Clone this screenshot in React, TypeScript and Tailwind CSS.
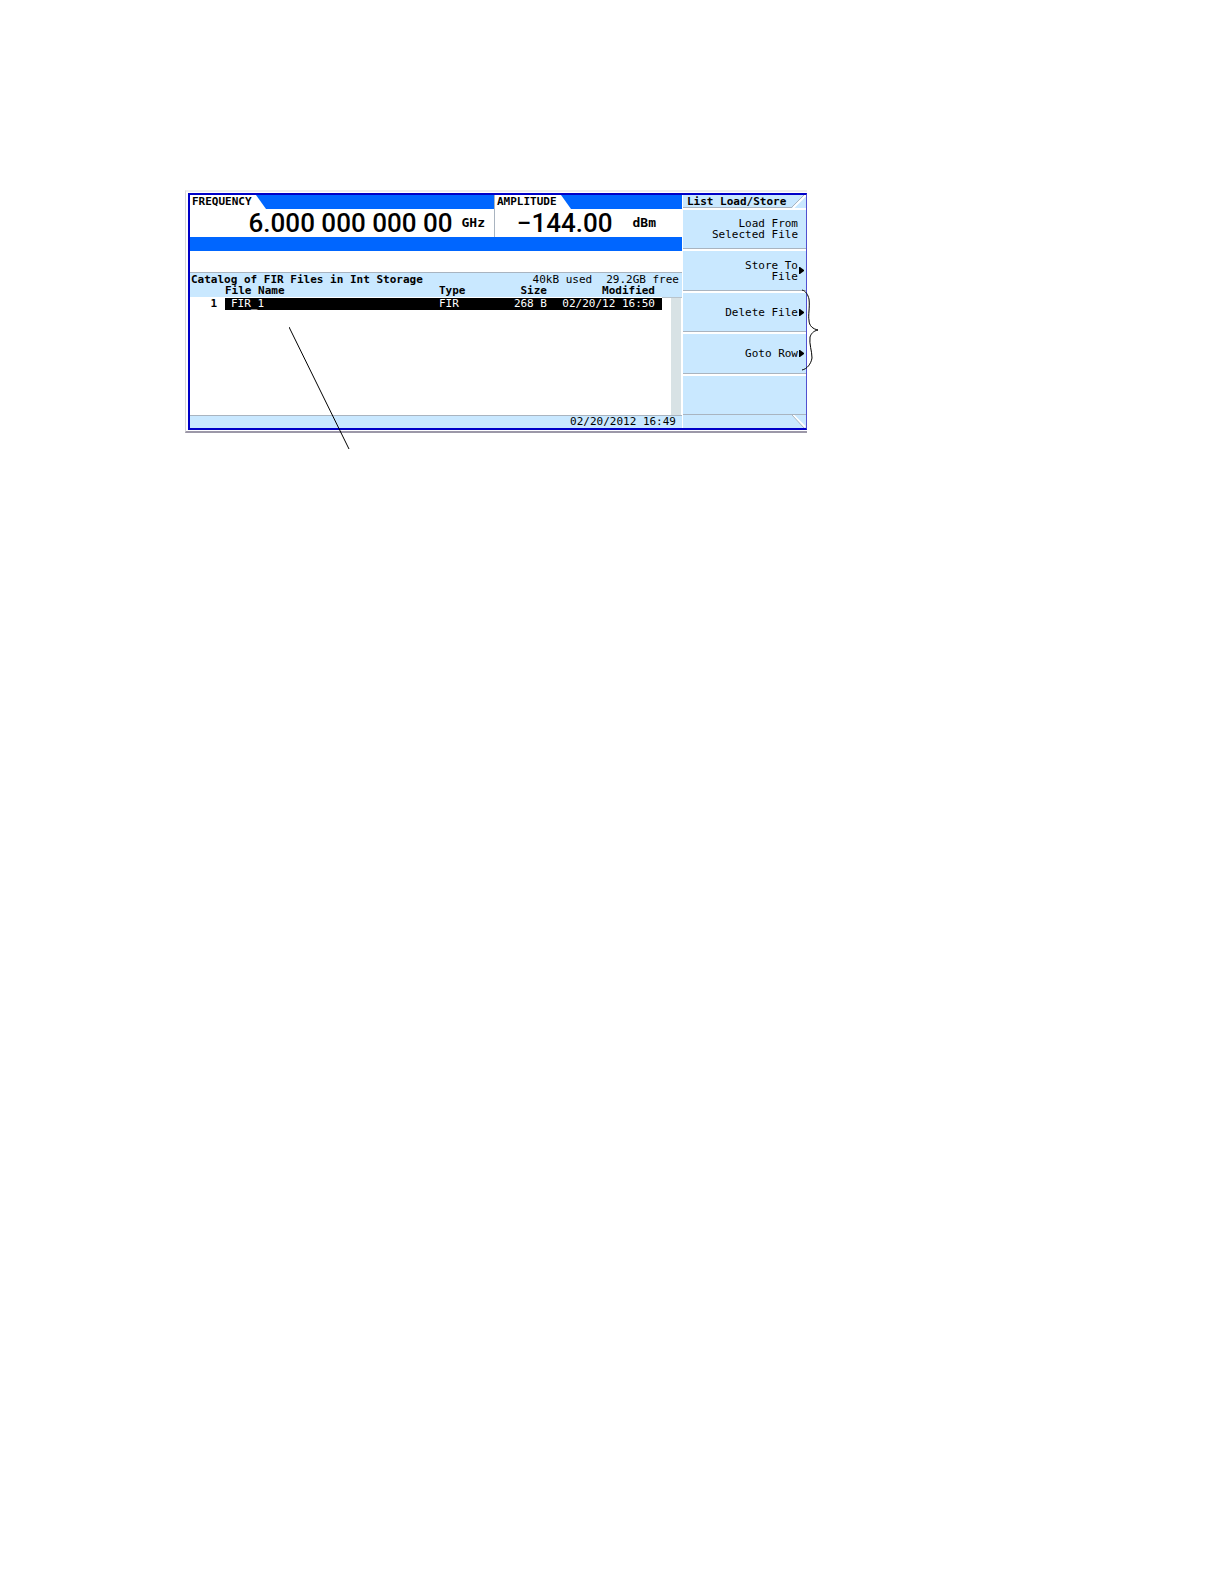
import React from "react";

type SoftKey = { lines: string[]; more?: boolean };

const softKeys: SoftKey[] = [
  { lines: ["Load From", "Selected File"] },
  { lines: ["Store To", "File"], more: true },
  { lines: ["Delete File"], more: true },
  { lines: ["Goto Row"], more: true },
  { lines: [] },
];

const files = [
  { row: 1, name: "FIR_1", type: "FIR", size: "268 B", modified: "02/20/12 16:50" },
];

function Readout({
  label,
  value,
  unit,
  className,
  valueClass,
}: {
  label: string;
  value: string;
  unit: string;
  className: string;
  valueClass: string;
}) {
  return (
    <section className={"flex flex-col " + className}>
      <div className="flex h-[14px] bg-[#0066ff]">
        <h2 className="bg-white pl-[2px] font-bold leading-[14px]">{label}</h2>
        <svg width="14" height="14" viewBox="0 0 14 14" aria-hidden="true">
          <path d="M0 0H4L14 14H0Z" fill="#fff" />
        </svg>
      </div>
      <div className={"flex h-[28px] items-center justify-end whitespace-nowrap bg-white " + valueClass}>
        <span className="font-['Roboto','Liberation_Sans',sans-serif] text-[26px] font-medium leading-[28px]">
          {value}
        </span>
        <span className="text-[13px] font-bold leading-[28px]">{unit}</span>
      </div>
    </section>
  );
}

function SoftKeyButton({ lines, more }: SoftKey) {
  return (
    <button
      type="button"
      aria-label={lines.length ? lines.join(" ") : "Unassigned key"}
      className="flex min-h-[41px] flex-1 items-center justify-end border-b border-t-2 border-b-[#a9b4c0] border-t-white bg-[#c9e8ff] pr-[2px] text-right leading-[11px]"
    >
      <span>
        {lines.map((line) => (
          <span key={line} className="block">
            {line}
          </span>
        ))}
      </span>
      <span className="ml-px w-[5px]">
        {more && (
          <svg width="5" height="7" viewBox="0 0 5 7" className="block" aria-hidden="true">
            <path d="M0 0H1L5 3V4L1 7H0Z" fill="#000" />
          </svg>
        )}
      </span>
    </button>
  );
}

function Catalog() {
  return (
    <section className="flex flex-1 flex-col bg-white">
      <div className="flex justify-between border-t border-[#a9b4c0] bg-[#c9e8ff] pl-[1px] pr-[3px] pt-[1px] leading-[11px]">
        <h3 className="font-bold">Catalog of FIR Files in Int Storage</h3>
        <p className="flex gap-[14px]">
          <span>40kB used</span>
          <span>29.2GB free</span>
        </p>
      </div>
      <div className="flex flex-1">
        <div className="flex-1">
          <table className="w-full table-fixed border-collapse leading-[11px]">
            <colgroup>
              <col className="w-[35px]" />
              <col />
              <col className="w-[62px]" />
              <col className="w-[46px]" />
              <col className="w-[115px]" />
              <col className="w-[9px]" />
            </colgroup>
            <thead className="border-b border-[#b9c4cc] bg-[#c9e8ff] text-left">
              <tr className="h-[12px]">
                <th className="p-0" />
                <th className="p-0">File Name</th>
                <th className="p-0">Type</th>
                <th className="p-0 text-right">Size</th>
                <th className="p-0 pr-[7px] text-right">Modified</th>
                <th className="p-0" />
              </tr>
            </thead>
            <tbody>
              {files.map((f) => (
                <tr key={f.row} className="h-[13px]">
                  <th scope="row" className="border-y border-white p-0 pr-[8px] text-right">
                    {f.row}
                  </th>
                  <td className="border-y border-white bg-black p-0 pl-[6px] text-white">{f.name}</td>
                  <td className="border-y border-white bg-black p-0 text-white">{f.type}</td>
                  <td className="border-y border-white bg-black p-0 text-right text-white">{f.size}</td>
                  <td className="border-y border-white bg-black p-0 pr-[7px] text-right text-white">{f.modified}</td>
                  <td className="p-0" />
                </tr>
              ))}
            </tbody>
          </table>
        </div>
        <div className="flex w-[11px] flex-col">
          <div className="h-[13px] border-b border-[#b9c4cc] bg-[#c9e8ff]" />
          <div className="flex-1 border-r border-white bg-[#d8e2e5]" />
        </div>
      </div>
    </section>
  );
}

export default function App() {
  return (
    <main className="min-h-screen bg-white pl-[185px] pt-[190px]">
      <div className="relative w-full max-w-[622px] border-b-2 border-l border-t-2 border-b-[#9c98a8] border-l-[#d8d8d8] border-t-[#eeeeee] pb-px pl-[2px] pt-px font-['DejaVu_Sans_Mono','Liberation_Mono',monospace] text-[11px] text-black">
        <div className="flex min-h-[237px] border-y-2 border-l-2 border-r border-[#0000c8] border-r-[#5050d0]">
          <div className="flex flex-1 flex-col bg-[#0066ff]">
            <div className="flex">
              <Readout label="FREQUENCY" value="6.000 000 000 00" unit="GHz" className="flex-1" valueClass="gap-[9px] pr-[9px]" />
              <Readout
                label="AMPLITUDE"
                value="−144.00"
                unit="dBm"
                className="w-[188px] border-l border-[#a9b4c0]"
                valueClass="gap-[20px] pr-[26px]"
              />
            </div>
            <div className="h-[14px]" />
            <div className="h-[21px] bg-white" />
            <Catalog />
            <footer className="flex h-[13px] items-center justify-end border-t border-[#a9b4c0] bg-[#c9e8ff] pr-[6px] leading-[12px]">
              02/20/2012 16:49
            </footer>
          </div>
          <nav className="flex w-[124px] flex-col border-l border-white bg-[#c9e8ff]" aria-label="List Load/Store">
            <div className="flex h-[13px]">
              <h2 className="flex-1 border-b border-[#a9b4c0] pl-[4px] font-bold leading-[13px]">List Load/Store</h2>
              <svg width="14" height="13" viewBox="0 0 14 13" aria-hidden="true">
                <path d="M1 13L14 0" stroke="#fff" strokeWidth="2" />
                <path d="M0 12L12 0" stroke="#a9b4c0" />
              </svg>
            </div>
            {softKeys.map((k, i) => (
              <SoftKeyButton key={i} {...k} />
            ))}
            <div className="flex h-[13px] justify-end">
              <svg width="14" height="13" viewBox="0 0 14 13" aria-hidden="true">
                <path d="M1 0L13 12" stroke="#fff" strokeWidth="2" />
                <path d="M0 0L12 13" stroke="#a9b4c0" />
              </svg>
            </div>
          </nav>
        </div>
        <svg className="absolute left-[103px] top-[135px]" width="61" height="124" viewBox="0 0 61 124" aria-hidden="true">
          <path d="M0 0L60 122" stroke="#000" fill="none" />
        </svg>
        <svg className="absolute -right-[12px] top-[97px]" width="18" height="84" viewBox="0 0 18 84" aria-hidden="true">
          <path
            d="M1 1C5 2 7 6 8 10C9 18 7 27 8 31C8 37 12 40 17 41C12 42 10 45 9 48C8 55 11 62 11 69C10 75 6 80 1 81"
            stroke="#000"
            fill="none"
          />
        </svg>
      </div>
    </main>
  );
}
